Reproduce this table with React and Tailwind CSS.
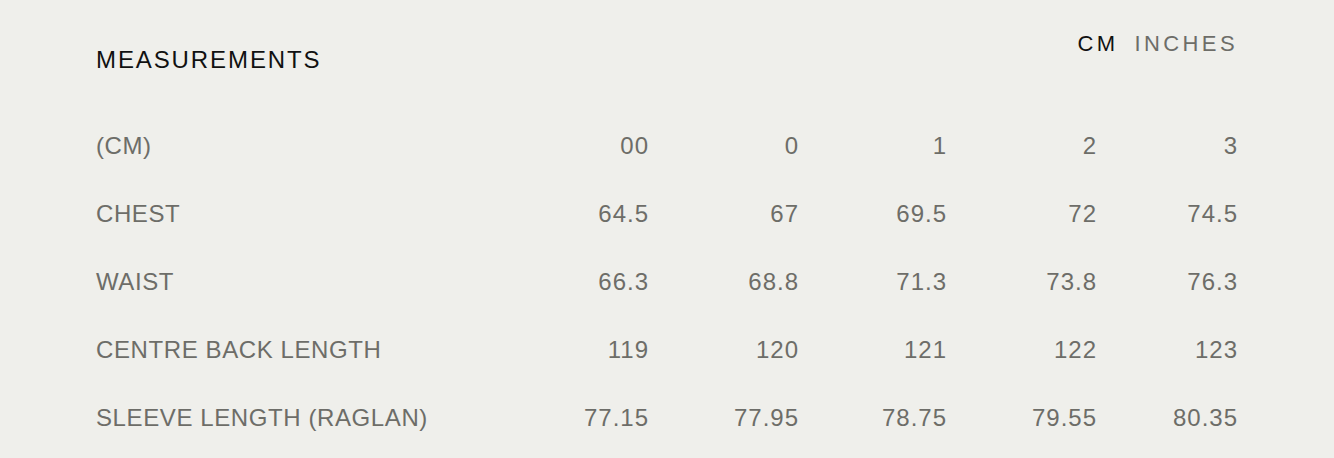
import React from "react";

const sizes = ["00", "0", "1", "2", "3"];
const rows = [
  ["CHEST", ["64.5", "67", "69.5", "72", "74.5"]],
  ["WAIST", ["66.3", "68.8", "71.3", "73.8", "76.3"]],
  ["CENTRE BACK LENGTH", ["119", "120", "121", "122", "123"]],
  ["SLEEVE LENGTH (RAGLAN)", ["77.15", "77.95", "78.75", "79.55", "80.35"]],
];

function Row({ label, values }) {
  return (
    <div className="grid grid-cols-[402px_150px_150px_148px_150px_141px] h-[68px] items-center">
      <div className="tracking-[0.6px]">{label}</div>
      {values.map((v, i) => (
        <div key={i} className="text-right tracking-[1px] mr-[-1px]">
          {v}
        </div>
      ))}
    </div>
  );
}

export default function App() {
  return (
    <div
      className="w-[1334px] h-[458px] bg-[#efefeb] overflow-hidden"
      style={{ fontFamily: '"Liberation Sans", Arial, sans-serif' }}
    >
      <div className="w-[1141px] ml-[96px] pt-[30px]">
        <div className="h-[82px] flex justify-between items-start">
          <div className="mt-[16px] text-[24px] leading-[28px] tracking-[1.9px] text-[#111111]">
            MEASUREMENTS
          </div>
          <div className="flex text-[22px] leading-[28px] tracking-[3.4px] mr-[-1px]">
            <span className="text-[#111111]">CM</span>
            <span className="ml-[16px] text-[#6d6d68]">INCHES</span>
          </div>
        </div>
        <div className="text-[24px] leading-[28px] text-[#6d6d68]">
          <Row label="(CM)" values={sizes} />
          {rows.map(([l, v]) => (
            <Row key={l} label={l} values={v} />
          ))}
        </div>
      </div>
    </div>
  );
}
